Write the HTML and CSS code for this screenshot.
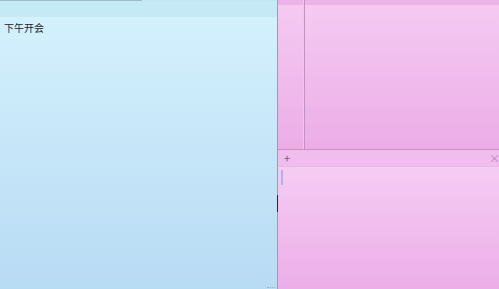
FILE: index.html
```html
<!DOCTYPE html>
<html lang="zh">
<head>
    <meta charset="UTF-8">
    <title>便笺</title>
    <link rel="stylesheet" href="styles.css">
</head>
<body>
    <div class="desk">
        <div class="note blue">
            <div class="note-head"></div>
            <div class="note-body">下午开会</div>
            <div class="edge-mark"></div>
            <div class="grip"></div>
        </div>
        <div class="stack">
            <div class="row-top">
                <div class="note pink slim">
                    <div class="note-head thin"></div>
                    <div class="note-body"></div>
                </div>
                <div class="note pink wide">
                    <div class="note-head thin"></div>
                    <div class="note-body"></div>
                </div>
            </div>
            <div class="note pink front">
                <div class="note-head bar">
                    <span class="plus">+</span>
                    <span class="close">×</span>
                </div>
                <div class="note-body"><span class="caret"></span></div>
            </div>
        </div>
    </div>
</body>
</html>
```

FILE: styles.css
```css
body {
    margin: 0;
    width: 499px;
    height: 289px;
    overflow: hidden;
    font-family: "Noto Sans CJK SC", "Noto Sans", sans-serif;
}

.desk {
    display: flex;
    height: 289px;
}

.note {
    display: flex;
    flex-direction: column;
    position: relative;
}

.blue {
    width: 277px;
    border-right: 1px solid #8fa3b3;
    background: linear-gradient(#d5f2fd, #b8dbf4);
}

.blue .note-head {
    height: 17px;
    background: #c6e9f6;
    border-top: 1px solid #c6e9f6;
    border-image: linear-gradient(90deg, #a4b9c6 0, #a4b9c6 142px, #c3e5f3 142px) 1;
    box-sizing: border-box;
}

.blue .note-body {
    padding: 5px 4px;
    font-size: 10px;
    line-height: 12px;
    color: #222;
    flex: 1;
}

.edge-mark {
    position: absolute;
    right: -1px;
    top: 195px;
    width: 1px;
    height: 17px;
    background: #2a2a2a;
}

.grip {
    position: absolute;
    right: 2px;
    bottom: 1px;
    width: 8px;
    height: 4px;
    border-bottom: 1px dotted #9ab0c0;
}

.stack {
    flex: 1;
    display: flex;
    flex-direction: column;
}

.row-top {
    display: flex;
    height: 150px;
    border-bottom: 1px solid #c98fc6;
    box-sizing: border-box;
}

.pink {
    background: linear-gradient(#f5cbf2, #ecade7);
}

.slim {
    width: 25px;
    border-right: 1px solid #f2c4ef;
    box-shadow: 1px 0 0 #bf95bd;
}

.wide {
    flex: 1;
    margin-left: 1px;
}

.note-head.thin {
    height: 5px;
    background: #ecb3e8;
}

.note-body {
    flex: 1;
}

.front {
    flex: 1;
    background: linear-gradient(#f7d0f5, #ecaee8);
}

.note-head.bar {
    height: 16px;
    display: flex;
    justify-content: space-between;
    align-items: center;
    padding: 0 0 0 6px;
    background: #f0bdee;
    border-bottom: 1px solid #eab6e7;
    font-size: 11px;
    color: #7a5a78;
}

.close {
    margin-right: -1px;
    color: #b08aae;
}

.front .note-body {
    padding: 3px 3px;
}

.caret {
    display: block;
    width: 2px;
    height: 15px;
    background: #a9b6ea;
}
```
